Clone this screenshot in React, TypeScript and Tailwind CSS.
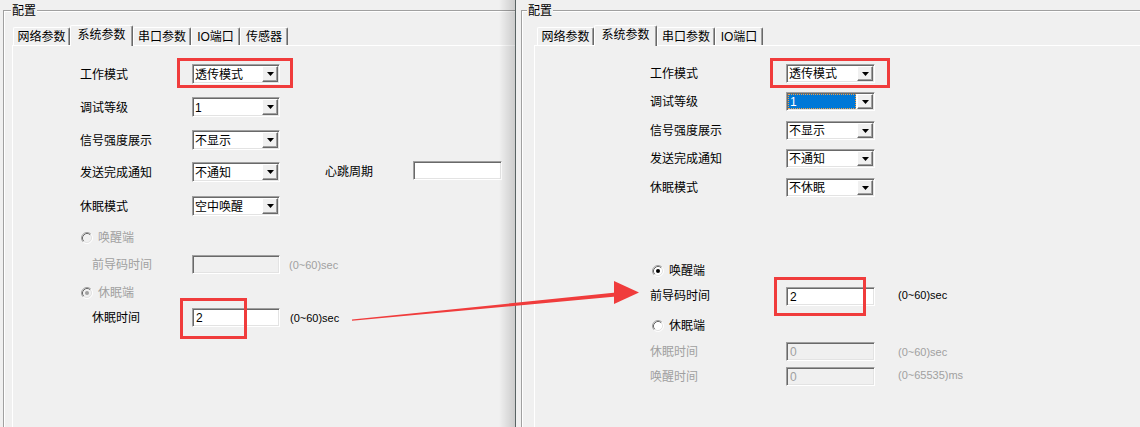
import React from "react"

type Tab = { label: string; w: string }

const TABS_LEFT: Tab[] = [
  { label: "网络参数", w: "w-[57px]" },
  { label: "系统参数", w: "w-[63px]" },
  { label: "串口参数", w: "w-[58px]" },
  { label: "IO端口", w: "w-[49px]" },
  { label: "传感器", w: "w-[48px]" },
]

const TABS_RIGHT: Tab[] = [
  { label: "网络参数", w: "w-[57px]" },
  { label: "系统参数", w: "w-[63px]" },
  { label: "串口参数", w: "w-[58px]" },
  { label: "IO端口", w: "w-[48px]" },
]

function Triangle() {
  return (
    <svg width="7" height="4" viewBox="0 0 7 4">
      <polygon points="0,0 7,0 3.5,4" fill="#000" />
    </svg>
  )
}

function DropButton() {
  return (
    <div className="flex w-[16px] shrink-0 items-center justify-center border border-t-white border-l-white border-b-[#696969] border-r-[#696969] bg-[#f0f0f0] shadow-[inset_-1px_-1px_0_#a0a0a0]">
      <Triangle />
    </div>
  )
}

// sunken edit frame, 2px each side
const SUNKEN =
  "flex h-full border border-t-[#a0a0a0] border-l-[#a0a0a0] border-b-white border-r-white p-px shadow-[inset_1px_1px_0_#696969,inset_-1px_-1px_0_#e3e3e3]"

function Combo({ value, w, focused }: { value: string; w: string; focused?: boolean }) {
  return (
    <div className={`${SUNKEN} ${w} bg-white`}>
      {focused ? (
        <div className="mr-px flex flex-1 items-center border border-dotted border-[#f5a043] bg-[#0078d7] pl-px text-white">
          {value}
        </div>
      ) : (
        <div className="flex flex-1 items-center pl-[1px] pt-px">{value}</div>
      )}
      <DropButton />
    </div>
  )
}

function Edit({ value, w, disabled, className = "" }: { value?: string; w: string; disabled?: boolean; className?: string }) {
  return (
    <div className={`${SUNKEN} ${w} ${className} ${disabled ? "bg-[#f0f0f0] text-[#a0a0a0]" : "bg-white"}`}>
      <div className="flex flex-1 items-center pl-[2px] pt-px">{value}</div>
    </div>
  )
}

function Radio({ checked, disabled }: { checked?: boolean; disabled?: boolean }) {
  return (
    <svg width="12" height="12" viewBox="0 0 12 12" className="shrink-0">
      <circle cx="6" cy="6" r="5" fill={disabled ? "#f0f0f0" : "#fff"} />
      <path d="M2.11 9.89A5.5 5.5 0 0 1 9.89 2.11" fill="none" stroke="#a0a0a0" />
      <path d="M9.89 2.11A5.5 5.5 0 0 1 2.11 9.89" fill="none" stroke="#fff" />
      <path d="M2.82 9.18A4.5 4.5 0 0 1 9.18 2.82" fill="none" stroke="#696969" />
      <path d="M9.18 2.82A4.5 4.5 0 0 1 2.82 9.18" fill="none" stroke="#e3e3e3" />
      {checked && <circle cx="6" cy="6" r="2" fill={disabled ? "#a0a0a0" : "#000"} />}
    </svg>
  )
}

function GroupBox({
  tabs,
  titleMl,
  stripPl,
  panelMl,
  children,
}: {
  tabs: Tab[]
  titleMl: string
  stripPl: string
  panelMl: string
  children: React.ReactNode
}) {
  return (
    <div className="flex flex-1 flex-col border-l border-t border-[#a0a0a0] shadow-[inset_1px_1px_0_#fff]">
      <span className={`-mt-[8px] h-[16px] w-fit bg-[#f0f0f0] px-px ${titleMl}`}>配置</span>
      <div className={`mt-[6px] flex h-[20px] items-end ${stripPl}`}>
        {tabs.map((t, i) =>
          i === 1 ? (
            <div
              key={t.label}
              className={`relative z-10 -mb-px flex h-[21px] shrink-0 justify-center rounded-t-[2px] border-l border-r border-t border-l-white border-t-white border-r-[#696969] bg-[#f0f0f0] pt-px shadow-[inset_-1px_0_0_#a0a0a0] ${t.w}`}
            >
              {t.label}
            </div>
          ) : (
            <div
              key={t.label}
              className={`flex h-[18px] shrink-0 items-center justify-center rounded-t-[2px] border-l border-r border-t border-l-white border-t-white border-r-[#696969] shadow-[inset_-1px_0_0_#a0a0a0] ${t.w}`}
            >
              {t.label}
            </div>
          )
        )}
      </div>
      <div className={`flex flex-1 flex-col border-l border-t border-white ${panelMl}`}>{children}</div>
    </div>
  )
}

function LeftForm() {
  return (
    <div className="flex flex-col pl-[67px] pt-[18px]">
      <div className="flex h-[20px] items-center">
        <span className="w-[112px] shrink-0 pt-px">工作模式</span>
        <Combo value="透传模式" w="w-[88px]" />
      </div>
      <div className="mt-[13px] flex h-[20px] items-center">
        <span className="w-[112px] shrink-0 pt-px">调试等级</span>
        <Combo value="1" w="w-[88px]" />
      </div>
      <div className="mt-[13px] flex h-[20px] items-center">
        <span className="w-[112px] shrink-0 pt-px">信号强度展示</span>
        <Combo value="不显示" w="w-[88px]" />
      </div>
      <div className="mt-[12px] flex h-[20px] items-center">
        <span className="w-[112px] shrink-0 pt-px">发送完成通知</span>
        <Combo value="不通知" w="w-[88px]" />
        <span className="ml-[45px] w-[88px] shrink-0">心跳周期</span>
        <div className="mb-[3px] h-[19px]">
          <Edit w="w-[89px]" />
        </div>
      </div>
      <div className="mt-[14px] flex h-[20px] items-center">
        <span className="w-[112px] shrink-0 pt-px">休眠模式</span>
        <Combo value="空中唤醒" w="w-[88px]" />
      </div>
      <div className="mt-[12px] flex h-[20px] items-center pl-px text-[#a0a0a0]">
        <Radio disabled />
        <span className="ml-[5px]">唤醒端</span>
      </div>
      <div className="mt-[7px] flex h-[19px] items-center text-[#a0a0a0]">
        <span className="w-[112px] shrink-0 pl-[12px]">前导码时间</span>
        <Edit w="w-[88px]" disabled />
        <span className="ml-[9px] text-[11px]">(0~60)sec</span>
      </div>
      <div className="mt-[9px] flex h-[20px] items-center pl-px text-[#a0a0a0]">
        <Radio checked disabled />
        <span className="ml-[5px]">休眠端</span>
      </div>
      <div className="mt-[5px] flex h-[19px] items-center">
        <span className="w-[112px] shrink-0 pl-[12px] pt-px">休眠时间</span>
        <Edit value="2" w="w-[88px]" />
        <span className="ml-[10px] text-[11px]">(0~60)sec</span>
      </div>
    </div>
  )
}

function RightForm() {
  return (
    <div className="flex flex-col pl-[115px] pt-[18px]">
      <div className="flex h-[19px] items-center">
        <span className="w-[136px] shrink-0 pt-px">工作模式</span>
        <Combo value="透传模式" w="w-[89px]" />
      </div>
      <div className="mt-[9px] flex h-[19px] items-center">
        <span className="w-[136px] shrink-0">调试等级</span>
        <Combo value="1" w="w-[89px]" focused />
      </div>
      <div className="mt-[10px] flex h-[19px] items-center">
        <span className="w-[136px] shrink-0">信号强度展示</span>
        <Combo value="不显示" w="w-[89px]" />
      </div>
      <div className="mt-[9px] flex h-[19px] items-center">
        <span className="w-[136px] shrink-0">发送完成通知</span>
        <Combo value="不通知" w="w-[89px]" />
      </div>
      <div className="mt-[10px] flex h-[19px] items-center">
        <span className="w-[136px] shrink-0 pt-px">休眠模式</span>
        <Combo value="不休眠" w="w-[89px]" />
      </div>
      <div className="mt-[64px] flex h-[19px] items-center pl-[2px]">
        <Radio checked />
        <span className="ml-[5px]">唤醒端</span>
      </div>
      <div className="mt-[7px] flex h-[19px] items-center">
        <span className="w-[136px] shrink-0 -mt-px">前导码时间</span>
        <Edit value="2" w="w-[89px]" />
        <span className="ml-[23px] -mt-[3px] text-[11px]">(0~60)sec</span>
      </div>
      <div className="mt-[10px] flex h-[19px] items-center pl-[2px]">
        <Radio />
        <span className="ml-[5px]">休眠端</span>
      </div>
      <div className="mt-[7px] flex h-[19px] items-center text-[#a0a0a0]">
        <span className="w-[136px] shrink-0">休眠时间</span>
        <Edit value="0" w="w-[89px]" disabled />
        <span className="ml-[23px] text-[11px]">(0~60)sec</span>
      </div>
      <div className="mt-[6px] flex h-[19px] items-center text-[#a0a0a0]">
        <span className="w-[136px] shrink-0">唤醒时间</span>
        <Edit value="0" w="w-[89px]" disabled />
        <span className="ml-[23px] -mt-[3px] text-[11px]">(0~65535)ms</span>
      </div>
    </div>
  )
}

export default function App() {
  return (
    <div className="relative flex h-[427px] w-[1140px] overflow-hidden bg-[#f0f0f0] font-['Liberation_Sans','Noto_Sans_CJK_SC',sans-serif] text-[12px] leading-[16px] text-black">
      {/* first capture */}
      <div className="relative flex w-[516px] shrink-0 flex-col border-r border-[#5a6464] pl-[3px] pt-[10px]">
        <GroupBox tabs={TABS_LEFT} titleMl="ml-[7px]" stripPl="pl-[9px]" panelMl="ml-[8px]">
          <LeftForm />
        </GroupBox>
        <div className="pointer-events-none absolute inset-y-0 right-0 w-[16px] bg-linear-to-r from-transparent to-black/15" />
      </div>

      {/* second capture */}
      <div className="flex flex-1 flex-col pl-[5px] pt-[10px]">
        <GroupBox tabs={TABS_RIGHT} titleMl="ml-[5px]" stripPl="pl-[15px]" panelMl="ml-[12px]">
          <RightForm />
        </GroupBox>
      </div>

      {/* red highlights */}
      <div className="pointer-events-none absolute left-[177px] top-[58px] h-[30px] w-[116px] border-[3px] border-[#f03c3c]" />
      <div className="pointer-events-none absolute left-[180px] top-[298px] h-[41px] w-[67px] border-[3px] border-[#f03c3c]" />
      <div className="pointer-events-none absolute left-[770px] top-[58px] h-[30px] w-[120px] border-[3px] border-[#f03c3c]" />
      <div className="pointer-events-none absolute left-[774px] top-[277px] h-[39px] w-[92px] border-[3px] border-[#f03c3c]" />

      {/* arrow */}
      <svg className="pointer-events-none absolute left-0 top-0" width="1140" height="427" viewBox="0 0 1140 427">
        <polygon points="352,319.5 616,292.6 616,296.6 352,320.7" fill="#f03c3c" />
        <polygon points="639,292.5 614,281 614,304" fill="#f03c3c" />
      </svg>
    </div>
  )
}
